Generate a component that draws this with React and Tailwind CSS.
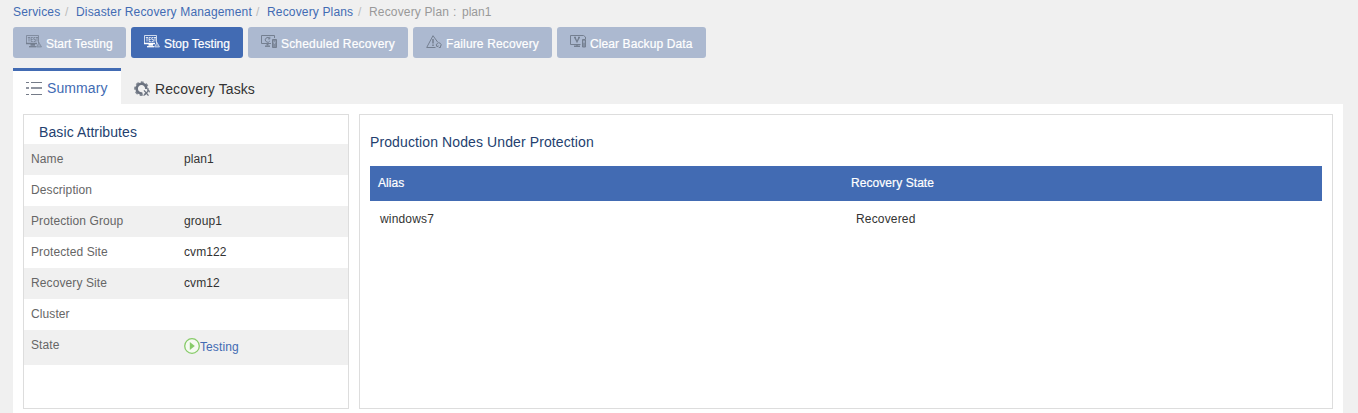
const iconClass = "h-4 w-4 shrink-0";

function TestIcon() {
  return (
    <svg viewBox="0 0 16 16" className={iconClass} fill="none" stroke="currentColor" strokeWidth="1">
      <path d="M12.5 9V1.5H.5v8h10.5" strokeOpacity=".75" />
      <path d="M1.8 3.5h2.4M3 3.5v4M6.8 3.5H5.1v4h1.7M5.1 5.5h1.6M9.4 3.5H7.8v1.9h1.5v2.1H7.6M9.9 3.5h2.2M11 3.5v4" strokeWidth=".8" />
      <path d="M0 9.5h11M4.5 11h4.5" strokeWidth="1.4" />
      <path d="M3 12.7h7" strokeWidth="1.3" />
      <path d="M13 8.5l2.5 4.500h-5z" fill="currentColor" fillOpacity=".35" strokeOpacity=".75" strokeWidth=".8" />
    </svg>
  );
}

function ScheduledIcon() {
  return (
    <svg viewBox="0 0 16 16" className={iconClass} fill="none" stroke="currentColor" strokeWidth="1">
      <path d="M10 9.5H.5v-8h13V4" />
      <path d="M8.7 4.5A2.4 2.4 0 1 0 8.8 7M8.8 2.8v2.1H6.9" />
      <path d="M6.5 9.5v2" strokeWidth="2" />
      <path d="M4 12.2h5" strokeWidth="1.4" />
      <path d="M11.5 5.5h4v8h-4z" fill="currentColor" fillOpacity=".75" />
      <path d="M12.7 7.5l.8 2 .8-2" stroke="#acb9d0" strokeWidth=".9" />
    </svg>
  );
}

function FailureIcon() {
  return (
    <svg viewBox="0 0 16 16" className={iconClass} fill="none" stroke="currentColor" strokeWidth="1">
      <path d="M9.5 13.5H.7L7 1.7l4.600 6.300" />
      <path d="M7 5v4.500M7 10.500v1.400" strokeWidth="1.5" />
      <path d="M11 12.5a2.3 2.3 0 1 1 3.8-.3M10.2 10.8l.8 1.9 1.7-.8M12.8 13.5h1.7v-1.8" />
    </svg>
  );
}

function ClearIcon() {
  return (
    <svg viewBox="0 0 16 16" className={iconClass} fill="none" stroke="currentColor" strokeWidth="1">
      <path d="M10.5 10.5H.5v-9h13l2 1.500V5" />
      <path d="M4 3.5h2M8 3.5h2M5 3.7l2 4 2-4" strokeWidth="1.4" />
      <path d="M7 10.5v1.500M4 12.300h6" strokeWidth="1.4" />
      <path d="M12.5 5.5h3v7.500h-3z" fill="currentColor" fillOpacity=".7" />
      <path d="M13.4 7.2l.6 1.500.6-1.500" stroke="#acb9d0" strokeWidth=".8" />
    </svg>
  );
}

function ListIcon() {
  return (
    <svg viewBox="0 0 16 16" className="h-4 w-4 shrink-0" fill="#747b88" shapeRendering="crispEdges">
      <path d="M0 2h3v1H0zM5 2h11v1H5zM0 14h3v1H0zM5 14h11v1H5z" />
      <path d="M0 7h3v2H0zM5 7h11v2H5z" opacity=".8" />
    </svg>
  );
}

function GearIcon() {
  return (
    <svg viewBox="0 0 16 16" className="h-4 w-4 shrink-0" fill="none" stroke="#6c7380">
      <circle cx="7.5" cy="7.7" r="6.5" strokeWidth="1.8" strokeDasharray="2.9 2.2" strokeDashoffset="1.4" strokeOpacity=".8" />
      <path d="M8.5 12.4A4.9 4.9 0 1 1 12.4 8" strokeWidth="2.6" />
      <path d="M10 9.3l4.500 5.300M14.600 9.600l-5 5" strokeWidth="1.3" />
      <path d="M13.3 9.5l2 .2v1.7" />
    </svg>
  );
}

function PlayIcon() {
  return (
    <svg viewBox="0 0 16 16" className="h-4 w-4 shrink-0">
      <circle cx="8" cy="8" r="7.3" fill="#f5faf2" stroke="#87cb69" strokeWidth="1.3" />
      <path d="M5.8 4l5 4-5 4z" fill="#87cb69" />
    </svg>
  );
}

const actions = [
  { label: "Start Testing", Icon: TestIcon, box: "w-[113px] bg-[#acb9d0]", icon: "text-[#747f90]", text: "tracking-[0.01px]" },
  { label: "Stop Testing", Icon: TestIcon, box: "w-[112px] bg-[#426bb3]", icon: "text-white", text: "tracking-[0.01px]" },
  { label: "Scheduled Recovery", Icon: ScheduledIcon, box: "w-[160px] bg-[#acb9d0]", icon: "text-[#747f90]", text: "tracking-[0.18px]" },
  { label: "Failure Recovery", Icon: FailureIcon, box: "w-[139px] bg-[#acb9d0]", icon: "text-[#747f90]", text: "tracking-[0.14px]" },
  { label: "Clear Backup Data", Icon: ClearIcon, box: "w-[149px] bg-[#acb9d0]", icon: "text-[#747f90]", text: "tracking-[0.1px]" },
];

const attributes = [
  ["Name", "plan1"],
  ["Description", ""],
  ["Protection Group", "group1"],
  ["Protected Site", "cvm122"],
  ["Recovery Site", "cvm12"],
  ["Cluster", ""],
];

export default function App() {
  return (
    <div className="flex h-[413px] flex-col overflow-hidden bg-[#f0f0f0] pl-[13px] pr-[15px] font-['Liberation_Sans',Arial,sans-serif] text-xs text-[#333]">
      <nav className="flex h-[27px] items-center whitespace-nowrap pb-[3px] tracking-[0.16px] text-[#426bb3]">
        <a className="w-[52px]">Services</a>
        <span className="w-[11px] text-[#bbb]">/</span>
        <a className="w-[180px]">Disaster Recovery Management</a>
        <span className="w-[11px] text-[#bbb]">/</span>
        <a className="w-[91px]">Recovery Plans</a>
        <span className="w-[11px] text-[#bbb]">/</span>
        <span className="w-[79px] text-[#999]">Recovery Plan</span>
        <span className="w-[14px] pl-[5px] text-[#999]">:</span>
        <span className="tracking-normal text-[#999]">plan1</span>
      </nav>

      <div className="flex gap-[5px]">
        {actions.map(({ label, Icon, box, icon, text }) => (
          <button key={label} className={`flex h-[31px] items-center gap-1 whitespace-nowrap rounded-[3px] pl-[13px] text-white ${box}`}>
            <span className={`-mt-0.5 ${icon}`}><Icon /></span>
            <span className={`pt-[3px] [-webkit-text-stroke:0.2px_white] ${text}`}>{label}</span>
          </button>
        ))}
      </div>

      <div className="mt-[10px] flex h-9 shrink-0 text-sm">
        <div className="flex w-[108px] items-center gap-[5px] border-t-3 border-[#426bb3] bg-white pl-[13px] text-[#426bb3]">
          <ListIcon />
          <span className="tracking-[0.1px]">Summary</span>
        </div>
        <div className="flex items-center gap-[5px] pl-[13px] pt-[5px]">
          <GearIcon />
          <span className="tracking-[0.1px]">Recovery Tasks</span>
        </div>
      </div>

      <main className="flex grow gap-[10px] bg-white p-[10px] pb-1">
        <section className="w-[326px] border border-[#ddd]">
          <h2 className="flex h-[29px] items-center pl-[15px] pt-[5px] text-sm tracking-[0.1px] text-[#243f6f]">Basic Attributes</h2>
          <dl className="tracking-[0.1px]">
            {attributes.map(([name, value]) => (
              <div key={name} className="flex h-[31px] items-center pb-0.5 pl-[7px] odd:bg-[#f0f0f0]">
                <dt className="w-[153px] text-[#666]">{name}</dt>
                <dd>{value}</dd>
              </div>
            ))}
            <div className="flex h-[35px] bg-[#f0f0f0] pl-[7px]">
              <dt className="w-[153px] pt-[7px] text-[#666]">State</dt>
              <dd className="flex items-start pt-2 text-[#426bb3]">
                <PlayIcon />
                <span className="pt-px">Testing</span>
              </dd>
            </div>
          </dl>
        </section>

        <section className="grow border border-[#ddd] px-[10px]">
          <h2 className="flex h-[51px] items-center pt-0.5 text-sm tracking-[0.11px] text-[#243f6f]">Production Nodes Under Protection</h2>
          <div className="flex h-[35px] items-center bg-[#426bb3] pb-0.5 pl-2 tracking-[0.07px] text-white [-webkit-text-stroke:0.2px_white]">
            <span className="w-[473px]">Alias</span>
            <span>Recovery State</span>
          </div>
          <div className="flex h-9 items-center pl-[10px] tracking-[0.16px]">
            <span className="w-[476px]">windows7</span>
            <span>Recovered</span>
          </div>
        </section>
      </main>
    </div>
  );
}
